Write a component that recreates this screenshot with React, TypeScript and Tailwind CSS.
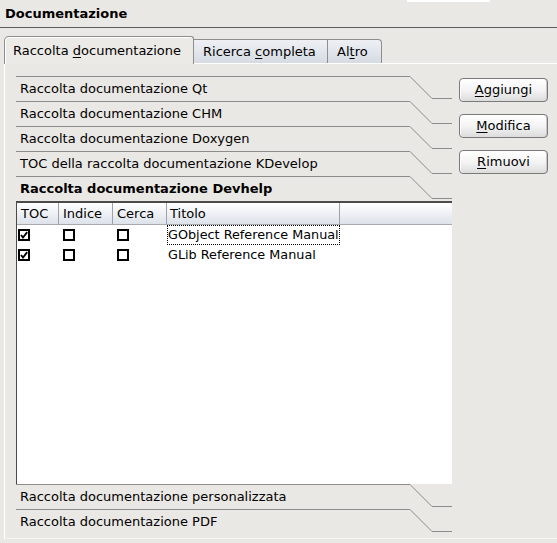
import React from "react";

const LINE = "#8c8c8c";

function Header({ text, bold }: { text: string; bold?: boolean }) {
  return (
    <div className="flex h-[25px] shrink-0">
      <div
        className={`flex-1 border-t border-[#8c8c8c] flex items-center pl-[4px] whitespace-nowrap ${bold ? "font-bold" : ""}`}
      >
        {text}
      </div>
      <svg width="42" height="25" className="shrink-0">
        <polyline points="0,0.5 22,22.5 42,22.5" stroke={LINE} strokeWidth="1" fill="none" />
      </svg>
    </div>
  );
}

function Check({ checked }: { checked?: boolean }) {
  return (
    <svg width="12" height="12" viewBox="0 0 12 12">
      <rect x="1" y="1" width="10" height="10" fill="white" stroke="black" strokeWidth="2" />
      {checked && <polyline points="3,6 5,8.5 9.2,3.2" stroke="black" strokeWidth="1.9" fill="none" />}
    </svg>
  );
}

function Btn({ first, rest }: { first: string; rest: string }) {
  return (
    <button className="h-[24px] w-[89px] rounded-[4px] border border-[#7a7a7a] bg-gradient-to-b from-white via-[#f4f4f4] to-[#dcdcdc] flex items-center justify-center text-[13px] text-black shadow-[inset_1px_0_0_#fff,inset_-1px_0_0_#c8c8c8]">
      <span className="underline underline-offset-2">{first}</span>
      {rest}
    </button>
  );
}

export default function App() {
  return (
    <div
      className="w-[557px] h-[543px] bg-[#eae8e5] overflow-hidden text-[13px] text-black flex flex-col"
      style={{ fontFamily: '"DejaVu Sans", sans-serif' }}
    >
      <div className="h-[28px] border-b border-[#5c5c5c] flex items-start shrink-0">
        <div className="pl-[5px] pt-[4px] font-bold flex-1">Documentazione</div>
        <div className="w-[83px] h-[2px] bg-white mr-[67px]" />
      </div>

      {/* tabs */}
      <div className="mt-[7px] h-[28px] pl-[4px] flex items-end shrink-0 relative z-10">
        <div className="h-[28px] w-[190px] -mb-px rounded-tl-[5px] rounded-tr-[3px] border border-b-0 border-[#8e8e8e] bg-[#eceae7] shadow-[inset_1px_1px_0_#ffffff] flex items-start pt-[4px] pl-[8px]">
          <span>
            Raccolta <span className="underline underline-offset-2">d</span>ocumentazione
          </span>
        </div>
        <div className="h-[24px] w-[134px] border-t border-r border-[#8e8e8e] bg-gradient-to-b from-[#eef0f4] to-[#d6dbe3] flex items-center pl-[9px]">
          <span>
            Ricerca <span className="underline underline-offset-2">c</span>ompleta
          </span>
        </div>
        <div className="h-[24px] w-[54px] border-t border-r border-[#8e8e8e] rounded-tr-[4px] bg-gradient-to-b from-[#eef0f4] to-[#d6dbe3] flex items-center pl-[9px]">
          <span>
            Al<span className="underline underline-offset-2">t</span>ro
          </span>
        </div>
      </div>

      {/* panel */}
      <div className="ml-[4px] h-[476px] border-t border-l border-white border-b border-b-[#f6f5f3] shrink-0 flex pt-[12px] pl-[11px] gap-[7px]">
        <div className="w-[436px] flex flex-col">
          <Header text="Raccolta documentazione Qt" />
          <Header text="Raccolta documentazione CHM" />
          <Header text="Raccolta documentazione Doxygen" />
          <Header text="TOC della raccolta documentazione KDevelop" />
          <Header text="Raccolta documentazione Devhelp" bold />

          {/* table */}
          <div className="h-[283px] bg-white border-l border-t-2 border-[#4a4a4a] flex flex-col shrink-0">
            <div className="h-[22px] flex border-b border-[#a6a9ae] bg-gradient-to-b from-white to-[#dde2ea] shrink-0">
              <div className="w-[42px] border-r border-[#9da2a8] pl-[4px] flex items-center">TOC</div>
              <div className="w-[54px] border-r border-[#9da2a8] pl-[4px] flex items-center">Indice</div>
              <div className="w-[54px] border-r border-[#9da2a8] pl-[4px] flex items-center">Cerca</div>
              <div className="w-[173px] border-r border-[#9da2a8] pl-[3px] flex items-center">Titolo</div>
              <div className="flex-1" />
            </div>
            {[
              { t: "GObject Reference Manual", focus: true },
              { t: "GLib Reference Manual", focus: false },
            ].map((r) => (
              <div key={r.t} className="h-[20px] flex shrink-0">
                <div className="w-[42px] pl-[1px] flex items-center">
                  <Check checked />
                </div>
                <div className="w-[54px] pl-[4px] flex items-center">
                  <Check />
                </div>
                <div className="w-[54px] pl-[4px] flex items-center">
                  <Check />
                </div>
                <div
                  className={`w-[173px] flex items-center whitespace-nowrap border border-dotted text-[12.8px] ${r.focus ? "border-black" : "border-transparent"}`}
                >
                  {r.t}
                </div>
              </div>
            ))}
          </div>

          <Header text="Raccolta documentazione personalizzata" />
          <Header text="Raccolta documentazione PDF" />
        </div>

        <div className="flex flex-col gap-[12px] pt-[2px]">
          <Btn first="A" rest="ggiungi" />
          <Btn first="M" rest="odifica" />
          <Btn first="R" rest="imuovi" />
        </div>
      </div>
    </div>
  );
}
